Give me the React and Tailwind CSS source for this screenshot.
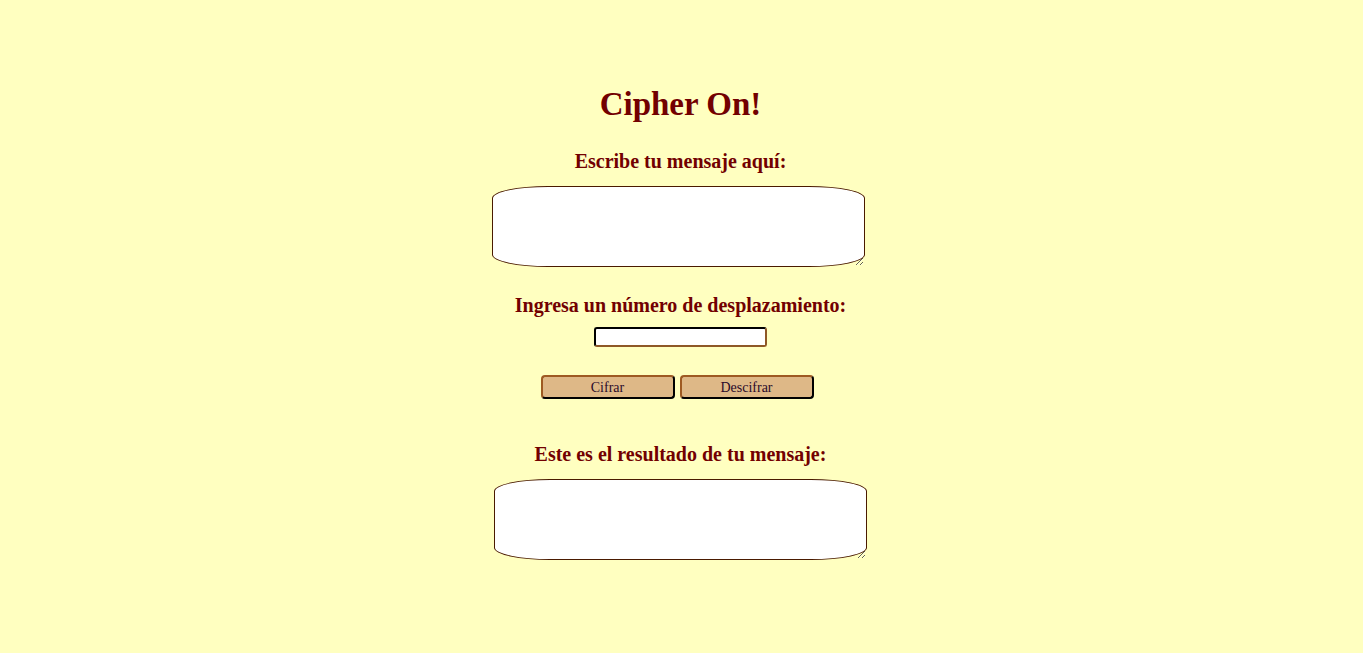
export default function App() {
  return (
    <div className="min-h-[653px] w-full bg-[#ffffc0] font-['Liberation_Serif',serif] text-[#720000]">
      <div className="flex flex-col items-center pt-[84px] pr-[2px]">
        <h1 className="text-[33px] font-bold leading-[40px]">Cipher On!</h1>

        <label className="mt-[25px] text-[20px] font-bold leading-[24px]">
          Escribe tu mensaje aquí:
        </label>
        <textarea className="mt-[13px] mr-[5px] h-[81px] w-[373px] resize rounded-[15%] border border-[#4a1a00] bg-white outline-none" />

        <label className="mt-[26px] text-[20px] font-bold leading-[24px]">
          Ingresa un número de desplazamiento:
        </label>
        <input
          type="text"
          className="mt-[10px] h-[20px] w-[173px] rounded-[3px] border-2 border-[#3a2410] bg-white outline-none [border-style:inset]"
        />

        <div className="mt-[28px] mr-[7px] flex gap-[5px]">
          <button className="h-[24px] w-[134px] rounded-[4px] border-2 border-[#4a2a10] bg-[#deb887] pt-[1px] text-[14px] leading-[18px] text-[#2a0a2a] [border-style:outset]">
            Cifrar
          </button>
          <button className="h-[24px] w-[134px] rounded-[4px] border-2 border-[#4a2a10] bg-[#deb887] pt-[1px] text-[14px] leading-[18px] text-[#2a0a2a] [border-style:outset]">
            Descifrar
          </button>
        </div>

        <label className="mt-[43px] text-[20px] font-bold leading-[24px]">
          Este es el resultado de tu mensaje:
        </label>
        <textarea className="mt-[13px] h-[81px] w-[373px] resize rounded-[15%] border border-[#4a1a00] bg-white outline-none" />
      </div>
    </div>
  )
}
